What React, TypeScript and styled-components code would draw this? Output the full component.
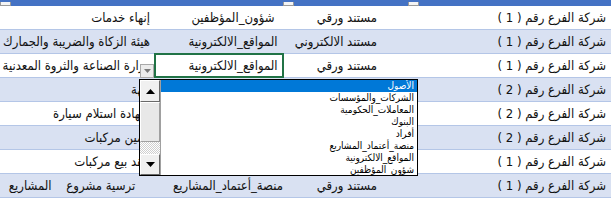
import React from 'react';
import styled, { createGlobalStyle, css } from 'styled-components';

const GlobalStyle = createGlobalStyle`
  html, body { margin: 0; padding: 0; background: #ffffff; }
  body { width: 611px; height: 205px; overflow: hidden; font-family: "DejaVu Sans Condensed", "DejaVu Sans", sans-serif; }
`;

const COLS = '203px 125px 128px 155px';

const Sheet = styled.div`
  position: relative;
  width: 611px;
  height: 205px;
  overflow: hidden;
  background: #ffffff;
  display: flex;
  flex-direction: column;
`;

const HeaderBand = styled.div`
  flex: none;
  height: 6px;
  background: #4472c4;
  display: grid;
  direction: rtl;
  grid-template-columns: ${COLS};
`;

const HeaderCell = styled.div`
  display: flex;
  justify-content: flex-end;
  align-items: flex-end;
`;

const FilterButton = styled.div`
  width: 11px;
  height: 4px;
  background: #f4f4f4;
  border: 1px solid #9a9a9a;
  border-top: none;
  box-sizing: border-box;
`;

const Row = styled.div<{ $band: boolean }>`
  flex: none;
  height: 24px;
  box-sizing: border-box;
  display: grid;
  direction: rtl;
  grid-template-columns: ${COLS};
  background: ${(p) => (p.$band ? '#d9e1f2' : '#ffffff')};
  border-bottom: 1px solid #b4c6e7;
`;

type ColKey = 'a' | 'b' | 'c' | 'd';

const colStyles: Record<ColKey, ReturnType<typeof css>> = {
  a: css`text-align: right; padding: 0 5px 0 0;`,
  b: css`text-align: right; padding: 0 31px 0 0;`,
  c: css`text-align: center; padding: 0 0 0 28px;`,
  d: css`text-align: right; padding: 0 5px 0 0;`,
};

const Cell = styled.div<{ $col: ColKey; $active?: boolean }>`
  position: relative;
  min-width: 0;
  overflow: hidden;
  white-space: pre;
  font-size: 13px;
  line-height: 23px;
  color: #111;
  ${(p) => colStyles[p.$col]}
  ${(p) =>
    p.$active &&
    css`
      overflow: visible;
      z-index: 2;
      box-shadow: 0 0 0 1px #217346, inset 0 0 0 1px #217346;
    `}
`;

const CellText = styled.span`
  display: inline-block;
`;

const ValidationButton = styled.div`
  position: absolute;
  left: -15px;
  bottom: -1px;
  width: 14px;
  height: 14px;
  box-sizing: border-box;
  background: #ececec;
  border: 1px solid #a9a9a9;
  display: flex;
  align-items: center;
  justify-content: center;
`;

const Dropdown = styled.div`
  position: absolute;
  left: 139px;
  top: 79px;
  width: 279px;
  height: 97px;
  box-sizing: border-box;
  border: 1px solid #000;
  background: #fff;
  display: flex;
  z-index: 5;
`;

const ScrollBar = styled.div`
  flex: none;
  width: 20px;
  display: flex;
  flex-direction: column;
  border-right: 1px solid #a0a0a0;
`;

const ScrollButton = styled.div<{ $h: number }>`
  flex: none;
  height: ${(p) => p.$h}px;
  box-sizing: border-box;
  background: #f0f0f0;
  border: 1px solid;
  border-color: #ffffff #696969 #696969 #ffffff;
  display: flex;
  align-items: center;
  justify-content: center;
`;

const Thumb = styled.div`
  flex: 1;
  box-sizing: border-box;
  background: #e8e8e8;
  border: 1px solid;
  border-color: #ffffff #a0a0a0 #a0a0a0 #ffffff;
`;

const Track = styled.div`
  flex: none;
  height: 12px;
  background: repeating-conic-gradient(#ffffff 0 25%, #cfcfcf 0 50%) 0 0 / 2px 2px;
`;

const List = styled.div`
  flex: 1;
  display: flex;
  flex-direction: column;
  direction: rtl;
  overflow: hidden;
`;

const Item = styled.div<{ $selected?: boolean }>`
  flex: none;
  height: 12px;
  line-height: 12px;
  font-size: 10px;
  padding-right: 3px;
  white-space: nowrap;
  color: ${(p) => (p.$selected ? '#ffffff' : '#000000')};
  background: ${(p) => (p.$selected ? '#0078d7' : 'transparent')};
`;

const Arrow = ({ dir, color = '#000', w = 9, h = 5 }: { dir: 'up' | 'down'; color?: string; w?: number; h?: number }) => (
  <svg width={w} height={h} viewBox={`0 0 ${w} ${h}`}>
    {dir === 'up' ? (
      <polygon points={`0,${h} ${w},${h} ${w / 2},0`} fill={color} />
    ) : (
      <polygon points={`0,0 ${w},0 ${w / 2},${h}`} fill={color} />
    )}
  </svg>
);

type RowData = { a: string; b: string; c: string; d: string; active?: boolean };

const FR1 = 'شركة الفرع رقم ( 1 )';
const FR2 = 'شركة الفرع رقم ( 2 )';
const PAPER = 'مستند ورقي';
const NB = '\u00A0';

const rows: RowData[] = [
  { a: FR1, b: PAPER, c: 'شؤون_المؤظفين', d: 'إنهاء خدمات' },
  { a: FR1, b: 'مستند الالكتروني', c: 'المواقع_الالكترونية', d: 'هيئة الزكاة والضريبة والجمارك' },
  { a: FR1, b: PAPER, c: 'المواقع_الالكترونية', d: 'وزارة الصناعة والثروة المعدنية', active: true },
  { a: FR2, b: '', c: '', d: 'جهة' },
  { a: FR2, b: '', c: '', d: 'شهادة استلام سيارة' },
  { a: FR2, b: '', c: '', d: 'تأمين مركبات' },
  { a: FR1, b: '', c: '', d: 'عقد بيع مركبات' },
  {
    a: FR1,
    b: PAPER,
    c: 'منصة_أعتماد_المشاريع',
    d: `${NB.repeat(4)}ترسية مشروع${NB.repeat(4)}المشاريع`,
  },
  { a: '', b: '', c: '', d: '' },
];

const items = [
  'الأصول',
  'الشركات_والمؤسسات',
  'المعاملات_الحكومية',
  'البنوك',
  'أفراد',
  'منصة_أعتماد_المشاريع',
  'المواقع_الالكترونية',
  'شؤون_المؤظفين',
];

export default function App() {
  return (
    <>
      <GlobalStyle />
      <Sheet>
        <HeaderBand>
          <HeaderCell><FilterButton /></HeaderCell>
          <HeaderCell><FilterButton /></HeaderCell>
          <HeaderCell />
          <HeaderCell><FilterButton /></HeaderCell>
        </HeaderBand>
        {rows.map((r, i) => (
          <Row key={i} $band={i % 2 === 1}>
            <Cell $col="a">{r.a}</Cell>
            <Cell $col="b">{r.b}</Cell>
            <Cell $col="c" $active={r.active}>
              <CellText>{r.c}</CellText>
              {r.active && (
                <ValidationButton>
                  <Arrow dir="down" color="#7a7a7a" w={7} h={4} />
                </ValidationButton>
              )}
            </Cell>
            <Cell $col="d">{r.d}</Cell>
          </Row>
        ))}
        <Dropdown>
          <ScrollBar>
            <ScrollButton $h={22}>
              <Arrow dir="up" />
            </ScrollButton>
            <Thumb />
            <Track />
            <ScrollButton $h={21}>
              <Arrow dir="down" />
            </ScrollButton>
          </ScrollBar>
          <List>
            {items.map((t, i) => (
              <Item key={t} $selected={i === 0}>{t}</Item>
            ))}
          </List>
        </Dropdown>
      </Sheet>
    </>
  );
}
